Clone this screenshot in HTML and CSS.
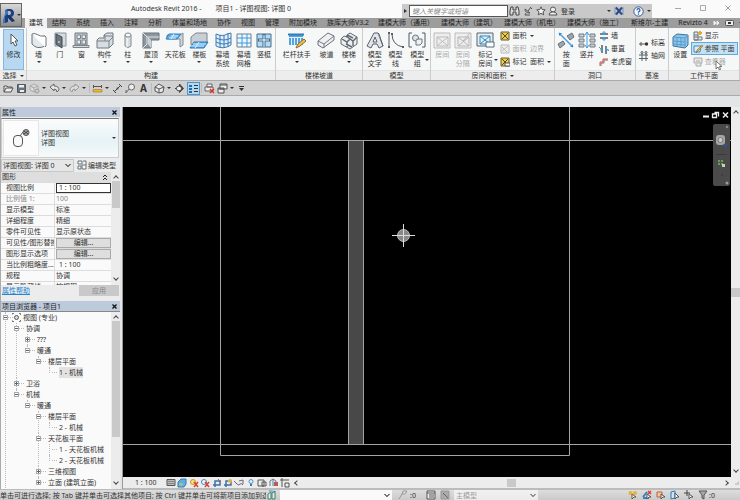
FILE: index.html
```html
<!DOCTYPE html>
<html lang="zh-CN">
<head>
<meta charset="utf-8">
<title>Autodesk Revit 2016</title>
<link rel="stylesheet" href="styles.css">
</head>
<body>
<header class="titlebar">
  <h1 class="title"><span>Autodesk Revit 2016 -</span><span>项目1 - 详图视图: 详图 0</span></h1>
  <div class="infocenter">
    <button class="expand" aria-label="展开"><i class="caret right"></i></button>
    <input class="search" type="text" placeholder="键入关键字或短语" aria-label="键入关键字或短语">
    <button class="ic" aria-label="搜索"><svg width="11" height="10" viewBox="0 0 11 10"><path d="M2 1h2v3h3V1h2l1 4v4H7V6H4v3H1V5z" fill="#ddd" stroke="#444"/></svg></button>
    <button class="ic" aria-label="通讯中心"><svg width="10" height="10" viewBox="0 0 10 10"><path d="M2 3l5 4M2 3q0 4 5 4M5 5l3-4M7 1l2 2M3 7l-1 2h5" fill="none" stroke="#555"/></svg></button>
    <button class="ic" aria-label="收藏夹"><svg width="10" height="10" viewBox="0 0 10 10"><path d="M5 .8l1.2 2.7 3 .3-2.2 2 .7 3L5 7.300 2.300 8.800 3 5.800.8 3.800l3-.3z" fill="#f4f4f4" stroke="#555"/></svg></button>
    <button class="ic login"><svg width="10" height="10" viewBox="0 0 10 10"><circle cx="5" cy="3.500" r="2.500" fill="#eee" stroke="#555"/><path d="M1 9q0-2.500 3-3h2q3 .5 3 3z" fill="#eee" stroke="#555"/></svg>登录</button>
    <i class="caret"></i>
    <button class="ic exchange" aria-label="Exchange"><svg width="10" height="10" viewBox="0 0 10 10"><path d="M1 1v8M9 1v8" stroke="#7d93bd"/><path d="M2 1.500l6 7M8 1.500l-6 7" stroke="#2a4a8c" stroke-width="2"/></svg></button>
    <button class="ic help" aria-label="帮助"><svg width="11" height="11" viewBox="0 0 11 11"><circle cx="5.500" cy="5.500" r="4.700" fill="#f3f6fc" stroke="#445a8c"/><path d="M4 4.300q0-1.600 1.500-1.600T7 4.200q0 .8-1.500 1.800v.7M5.500 7.600v1.200" fill="none" stroke="#2461b4" stroke-width="1.200"/></svg></button>
    <i class="caret"></i>
  </div>
  <div class="winctl">
    <button aria-label="最小化"><svg width="8" height="8" viewBox="0 0 8 8"><path d="M1 4.500h6" stroke="#a8a8a8"/></svg></button>
    <button aria-label="还原"><svg width="8" height="8" viewBox="0 0 8 8"><path d="M1.500 1.500h5v5h-5z" fill="none" stroke="#aaa"/></svg></button>
    <button aria-label="关闭"><svg width="8" height="8" viewBox="0 0 8 8"><path d="M1.500 1.500l5 5m0-5l-5 5" stroke="#999"/></svg></button>
  </div>
</header>
<button class="appmenu" aria-label="应用程序菜单"><svg width="14" height="17" viewBox="0 0 14 17"><path d="M3 3l3-1v13l-3 1zM6 2h3q3 1 3 4t-3 4H6V8h2q1-1 1-2T8 4H6z" fill="#1b3f83"/><path d="M6 9l3 .500 4 4.500-3 1-4-4z" fill="#17346b"/><path d="M1 13l2-6v9l-2 .500zM3 3l3 1v3L3 9z" fill="#4273bd"/></svg><i class="caret"></i></button>
<nav class="tabs">
  <button class="active">建筑</button><button>结构</button><button>系统</button><button>插入</button><button>注释</button><button>分析</button><button>体量和场地</button><button>协作</button><button>视图</button><button>管理</button><button>附加模块</button><button>族库大师V3.2</button><button class="vendor">建模大师（通用）</button><button class="vendor">建模大师（建筑）</button><button class="vendor">建模大师（机电）</button><button class="vendor">建模大师（施工）</button><button>斯维尔-土建</button><button>Revizto 4</button>
  <span class="tabtools"><svg width="8" height="6" viewBox="0 0 8 6"><path d="M1 1l2 2-2 2zM4 1l2 2-2 2z" fill="#eee" stroke="#eee"/></svg><svg width="10" height="7" viewBox="0 0 10 7"><rect x=".5" y=".5" width="8" height="5" rx="1" fill="#eee" stroke="#555"/><path d="M3 3h3" stroke="#333" stroke-width="2"/></svg><i class="caret"></i></span>
</nav>
<main class="ribbon">
  <section class="panel select">
    <div class="tools">
      <button class="tool on"><svg viewBox="0 0 20 20"><path d="M7 4v10l2-2 2 4 2-1-2-4h3z" fill="#fff" stroke="#555"/></svg>修改</button>
    </div>
    <h2>选择 <i class="caret"></i></h2>
  </section>
  <section class="panel build">
    <div class="tools">
      <button class="tool"><svg viewBox="0 0 20 20"><path d="M3 4q6 5 13 2v10q-8 4-13-2z" fill="#e4e8ec" stroke="#667078"/><path d="M3 4q2-1 4 0 5 3 9 2l1 1v9l-1 1" fill="#fff" stroke="#778"/></svg>墙<i class="caret"></i></button>
      <button class="tool"><svg viewBox="0 0 20 20"><path d="M5 3h11v13H5z" fill="#d5dce0" stroke="#899399"/><path d="M6 4l6 3v11l-6-4z" fill="#69747d" stroke="#444c54"/><path d="M9 11v2" stroke="#fff"/></svg>门</button>
      <button class="tool"><svg viewBox="0 0 20 20"><path d="M4 3h12v12H4z" fill="#c6cbd0" stroke="#717980"/><path d="M6 5h3.500v3.500H6zm5 0h3.500v3.500H11zM6 10h3.500v4H6zm5 0h3.500v4H11z" fill="#e8edf0" stroke="#7e878e"/><path d="M2 15.500h16v2H2z" fill="#d7dadd" stroke="#7c848b"/></svg>窗</button>
      <button class="tool"><svg viewBox="0 0 20 20"><path d="M2 10l2-2h5V5l3-2h6v11l-4 4H2z" fill="#d8dde1" stroke="#707a82"/><path d="M9 5l1 1h8M10 6v5H2m8 0h4v7m0-7l4-4" fill="none" stroke="#78828a"/></svg>构件<i class="caret"></i></button>
      <button class="tool"><svg viewBox="0 0 20 20"><path d="M7 5v11q3 3 6 0V5z" fill="#d8dde1" stroke="#818a91"/><ellipse cx="10" cy="5" rx="3" ry="2" fill="#f6f7f8" stroke="#818a91"/><path d="M9 8v9" stroke="#fff"/></svg>柱<i class="caret"></i></button>
      <button class="tool"><svg viewBox="0 0 20 20"><path d="M2 3h16v7h-8v8H2z" fill="#8c969e" stroke="#697279"/><path d="M2 3l4 4h12M6 7v7l-4 4" fill="none" stroke="#e2e6e9"/><path d="M10 10v8l-3-4V7z" fill="#ccd3d8"/></svg>屋顶<i class="caret"></i></button>
      <button class="tool"><svg viewBox="0 0 20 20"><path d="M2 5h13l3-2v12l-3 2V9H2z" fill="#cfd5da" stroke="#838c93"/><path d="M4 4h12l-4 5H1z" fill="#65aee5" stroke="#2e81c5"/><path d="M6 6h7m-9 2h7M9 4L6 9" stroke="#def2ff"/></svg>天花板</button>
      <button class="tool"><svg viewBox="0 0 20 20"><path d="M2 7l5-4h11v10l-5 2H2z" fill="#c9d0d5" stroke="#7b858c"/><path d="M5 12h14l-4 6H1z" fill="#58a7e2" stroke="#2b7abc"/><path d="M4 14h13M2 16h13M10 12l-4 6" stroke="#dff2ff"/></svg>楼板<i class="caret"></i></button>
      <button class="tool"><svg viewBox="0 0 20 20"><path d="M3 4q7 3 11 0l4-1v12q-8 5-15 1z" fill="#dceeff" stroke="#467ba5"/><path d="M3 8q8 4 15 0M3 12q8 4 15 0M7 5v13m4-13v13m4-15v14" fill="none" stroke="#397ab0"/></svg>幕墙<br>系统</button>
      <button class="tool"><svg viewBox="0 0 20 20"><path d="M3 4h14v13H3z" fill="#eef7ff" stroke="#71808a"/><path d="M3 8h14M3 13h14M8 4v13m5-13v13" stroke="#3f97db"/></svg>幕墙<br>网格</button>
      <button class="tool"><svg viewBox="0 0 20 20"><path d="M3 4h14v13H3z" fill="#b5d9f3" stroke="#486c88"/><path d="M4 10h12M10 4v13" stroke="#39688d" stroke-width="3"/><path d="M5 10h10M10 5v12" stroke="#fff"/></svg>竖梃</button>
    </div>
    <h2>构建</h2>
  </section>
  <section class="panel stairs">
    <div class="tools">
      <button class="tool"><svg viewBox="0 0 20 20"><path d="M2 4h14v11H2z" fill="#56a2dc"/><path d="M1 7.500h16M4.500 7v9m3-9v9m3-9v9m3-9v9" stroke="#dff0fc"/><path d="M1 3.500h16v2H1z" fill="#347cb6"/><path d="M9 18l2-4 6-5 2 2-6 5z" fill="#f0c04a" stroke="#8e6b2a"/></svg>栏杆扶手<i class="caret"></i></button>
      <button class="tool"><svg viewBox="0 0 20 20"><path d="M2 11L12 3l6 3v4L7 18l-5-3z" fill="#eef0f2" stroke="#68727a"/><path d="M2 11l6 3 10-8M8 14v4" fill="none" stroke="#727c83"/></svg>坡道</button>
      <button class="tool"><svg viewBox="0 0 20 20"><path d="M2 9l3-3 3 1V5l3-2 7 4v7l-7 5-9-5z" fill="#eceff1" stroke="#606a71"/><path d="M3 9l5 3 3-3 3 2 4-4M8 12v5m3-8l-4-3m7 5v5M8 5l6 3M7 14l6 3" fill="none" stroke="#606a71" stroke-width="1.400"/></svg>楼梯<i class="caret"></i></button>
    </div>
    <h2>楼梯坡道</h2>
  </section>
  <section class="panel model">
    <div class="tools">
      <button class="tool"><svg viewBox="0 0 20 20"><path d="M2 16L9 3h4l5 13-4 2-2-4H8l-2 4z" fill="#e3e7ea" stroke="#56616a"/><path d="M10 7l-2 5h4zM13 3l1 1 4 12" fill="#fff" stroke="#56616a"/></svg>模型<br>文字</button>
      <button class="tool"><svg viewBox="0 0 20 20"><path d="M3 3v14M6 4q0 11 11 13" fill="none" stroke="#555f67"/><path d="M2 2h2v2H2zm0 14h2v2H2zM5 3h2v2H5zm11 13h2v2h-2z" fill="#56616a"/></svg>模型<br>线</button>
      <button class="tool"><svg viewBox="0 0 20 20"><path d="M5 3H2v14h3m10-14h3v14h-3" fill="none" stroke="#4d5a64"/><circle cx="8.500" cy="8" r="3" fill="#dce3e7" stroke="#6a767f"/><path d="M9 10l2-1h4v4l-2 2H9z" fill="#eef1f3" stroke="#6a767f"/></svg>模型<br>组<i class="caret side"></i></button>
    </div>
    <h2>模型</h2>
  </section>
  <section class="panel room">
    <div class="tools">
      <button class="tool" disabled><svg viewBox="0 0 20 20"><path d="M2 3h16v15H2z" fill="#eee" stroke="#bbb"/><path d="M5 7h11v9H5zl11 9m0-9L5 16" fill="none" stroke="#bbb"/></svg>房间</button>
      <button class="tool" disabled><svg viewBox="0 0 20 20"><path d="M2 3h16v15H2z" fill="#eee" stroke="#bbb"/><path d="M5 7h11v9H5zl11 9m0-9L5 16M10 11l7-8" fill="none" stroke="#b7b7b7"/></svg>房间<br>分隔</button>
      <button class="tool"><svg viewBox="0 0 20 20"><path d="M2 3h16v13H2z" fill="#e9edef" stroke="#59646b"/><path d="M5 6h10v8H5zl10 8m0-8L5 14" fill="none" stroke="#2b8bc8"/><path d="M11 12h8v5h-8z" fill="#fff" stroke="#4f6c80"/></svg>标记<br>房间<i class="caret side"></i></button>
      <div class="stack">
        <button class="row"><svg viewBox="0 0 10 10"><path d="M1 1h8v8H1z" fill="#f1cd45" stroke="#645b37"/><path d="M2 2l6 6m0-6L2 8" stroke="#544c2f"/></svg>面积<i class="caret"></i></button>
        <button class="row" disabled><svg viewBox="0 0 10 10"><path d="M1 1h8v8H1zM2 7l6-5M2 3l5 5" fill="#eee" stroke="#bbb"/></svg>面积&ensp;边界</button>
        <button class="row"><svg viewBox="0 0 10 10"><path d="M1 1h8v8H1z" fill="#f1cd45" stroke="#645b37"/><path d="M2 2l6 6m0-6L2 8" stroke="#544c2f"/><path d="M5 6h5v3H5z" fill="#fff" stroke="#555"/></svg>标记&ensp;面积<i class="caret"></i></button>
      </div>
    </div>
    <h2>房间和面积 <i class="caret"></i></h2>
  </section>
  <section class="panel opening">
    <div class="tools">
      <button class="tool"><svg viewBox="0 0 20 20"><path d="M11 6l5-3 2 4-4 3zM2 14l5-3 2 3-5 4z" fill="#9ca6ad" stroke="#66717a"/><path d="M3 3l14 14" stroke="#4aa1e1" stroke-width="1.500"/><path d="M3 3v3l3-3zm14 14v-3l-3 3z" fill="#328acb"/></svg>按<br>面</button>
      <button class="tool"><svg viewBox="0 0 20 20"><path d="M2 4h5v3H2zm11 0h5v3h-5zM2 9h5v3H2zm11 0h5v3h-5zM2 14h5v3H2zm11 0h5v3h-5z" fill="#c8d0d5" stroke="#707d86"/><path d="M10 2v16M8 5l2-3 2 3M8 15l2 3 2-3" fill="none" stroke="#47a0df"/></svg>竖井</button>
      <div class="stack">
        <button class="row"><svg viewBox="0 0 10 10"><path d="M1 3h8M1 7h8" stroke="#4f5e68" stroke-width="1.500"/><path d="M5 0v4m0 2v4M3 2h4M3 8h4" stroke="#39a0e7"/></svg>墙</button>
        <button class="row"><svg viewBox="0 0 10 10"><path d="M3 1v8m4-7v8" stroke="#4f5e68" stroke-width="1.500"/><path d="M0 3l3 3m4-2l3 3M1 6h2m4 0h3" stroke="#39a0e7"/></svg>垂直</button>
        <button class="row"><svg viewBox="0 0 10 10"><path d="M1 9V5h3V2h5" fill="none" stroke="#dc4f45"/><path d="M2 9V6h3V3h4" fill="none" stroke="#8b6a65"/></svg>老虎窗</button>
      </div>
    </div>
    <h2>洞口</h2>
  </section>
  <section class="panel datum">
    <div class="tools">
      <div class="stack">
        <button class="row"><svg viewBox="0 0 10 10"><path d="M0 6h6M2 4v4" stroke="#555"/><circle cx="7.500" cy="6" r="1.700" fill="#333"/></svg>标高</button>
        <button class="row"><svg viewBox="0 0 10 10"><path d="M3 1v9m4-9v9M0 4h9M0 7.500h9" stroke="#56616a"/><circle cx="3" cy="1.500" r="1" fill="#fff" stroke="#555"/><circle cx="7" cy="1.500" r="1" fill="#fff" stroke="#555"/></svg>轴网</button>
      </div>
    </div>
    <h2>基准</h2>
  </section>
  <section class="panel plane">
    <div class="tools">
      <button class="tool"><svg viewBox="0 0 20 20"><path d="M3 7l4-3 11 1v10l-3 3-12-2z" fill="#8cc5ea" stroke="#38749f"/><path d="M3 7l12 1 3-3M15 8v10M3 11l12 1M3 14l12 1M7 7v9m4-9v9" fill="none" stroke="#5b9dcb"/></svg>设置</button>
      <div class="stack">
        <button class="row"><svg viewBox="0 0 10 10"><path d="M1 1h4v8H1zM1 4h4M1 6h8v3H1" fill="#e6ebee" stroke="#68747c"/><path d="M7 0v4M5 2h4" stroke="#e2aa32" stroke-width="2"/></svg>显示</button>
        <button class="row on"><svg viewBox="0 0 10 10"><path d="M1 8V2h7L7 8z" fill="#d8edfa" stroke="#438dbf"/><path d="M3 9l1-3 5-5 1 1-5 5z" fill="#e7aa41" stroke="#825e27" stroke-width=".5"/></svg>参照 平面</button>
        <button class="row" disabled><svg viewBox="0 0 10 10"><path d="M1 1h8v5H1zM3 4h4M3 7v2h5V6" fill="#e8e8e8" stroke="#aaa"/></svg>查看器</button>
      </div>
      <svg class="pointer" width="8" height="11" viewBox="0 0 8 11"><path d="M1 1v8l2-2 1.500 3 1-.5L4.500 6.500H7z" fill="#fff" stroke="#555" stroke-width=".8"/></svg>
    </div>
    <h2>工作平面</h2>
  </section>
</main>
<div class="qat">
  <button aria-label="打开"><svg viewBox="0 0 11 11"><path d="M1 9V3h3l1 1h4v1M1 9l2-4h7L8 9z" fill="#eee" stroke="#555"/></svg></button>
  <button aria-label="保存"><svg viewBox="0 0 11 11"><path d="M1.500 1.500h8v8h-8z" fill="#68737d" stroke="#4d5860"/><path d="M3 2h5v2.500H3zm1 5h4v2H4z" fill="#eee"/></svg></button>
  <button aria-label="同步"><svg viewBox="0 0 11 11"><path d="M1 3l4-2 4 2v4L5 9 1 7zM1 3l4 2 4-2M5 5v4" fill="#ddd" stroke="#aaa"/><circle cx="8" cy="8" r="2" fill="#ccc" stroke="#999"/></svg></button><i class="caret"></i>
  <button aria-label="放弃"><svg viewBox="0 0 11 11"><path d="M1 4l4-3v2q5 0 5 4L8 9q0-3-3-3v2z" fill="#e6e6e6" stroke="#666"/></svg></button><i class="caret"></i>
  <button aria-label="重做"><svg viewBox="0 0 11 11"><path d="M10 4L6 1v2Q1 3 1 7l2 2q0-3 3-3v2z" fill="#ddd" stroke="#999"/></svg></button><i class="caret"></i>
  <span class="sep"></span>
  <button aria-label="测量"><svg viewBox="0 0 11 11"><path d="M1 6.500h9v2.500H1z" fill="#f1b52c" stroke="#a1752a" stroke-width=".6"/><path d="M1 3.500h9M1.500 2v3m8-3v3" stroke="#555"/></svg></button><i class="caret"></i>
  <button aria-label="对齐尺寸标注"><svg viewBox="0 0 11 11"><path d="M2 9l7-7M1 7l3 3m3-9l3 3" stroke="#444"/><circle cx="5.500" cy="5.500" r="1" fill="#444"/></svg></button>
  <button aria-label="标记"><svg viewBox="0 0 11 11"><circle cx="6.500" cy="4" r="3" fill="#eee" stroke="#666"/><path d="M1 10l3-4m-3 4V7" stroke="#666"/></svg></button>
  <button class="textcmd" aria-label="文字">A</button>
  <span class="sep"></span>
  <button aria-label="三维视图"><svg viewBox="0 0 11 11"><path d="M1 4l4-3 5 3-1 5-4 1-4-2z" fill="#e8eaec" stroke="#555"/><path d="M1 4l4 2 5-2M5 6v4" fill="none" stroke="#555"/></svg></button><i class="caret"></i>
  <button aria-label="剖面"><svg viewBox="0 0 11 11"><path d="M1 5.500h2M5.500 1l4 4.500-4 4z" fill="#444" stroke="#444"/><circle cx="5" cy="5.500" r="2.500" fill="#eee" stroke="#444"/></svg></button>
  <button class="on" aria-label="细线"><svg viewBox="0 0 11 11"><path d="M1 3h3M1 6h3M1 9h3" stroke="#246da8" stroke-width="2"/><path d="M6 2.500h4M6 5.500h4M6 8.500h4" stroke="#333"/></svg></button>
  <span class="sep"></span>
  <button aria-label="关闭隐藏窗口"><svg viewBox="0 0 11 11"><path d="M3 1h5v3H3zM1 4h8v4H1z" fill="#eee" stroke="#666"/><path d="M6 6l4 4m0-4l-4 4" stroke="#da352c" stroke-width="1.500"/></svg></button>
  <button aria-label="切换窗口"><svg viewBox="0 0 11 11"><path d="M3 1h7v5H3zM1 5h6v5H1z" fill="#eee" stroke="#555"/><path d="M1 6h6M3 2h7" stroke="#555"/></svg></button><i class="caret"></i>
  <svg viewBox="0 0 11 11"><path d="M3 3.500h5" stroke="#333"/><path d="M3 5h5L5.500 8z" fill="#333"/></svg>
</div>
<div class="workspace">
  <aside class="palettes">
    <div class="cap"><h2>属性</h2><button aria-label="关闭属性"><svg width="5" height="5" viewBox="0 0 5 5"><path d="M.5.5l4 4m0-4l-4 4" stroke="#111" stroke-width="1.300"/></svg></button></div>
    <button class="typesel"><span class="thumb"><svg width="20" height="20" viewBox="0 0 20 20"><rect x="2.500" y="7.500" width="9" height="11" rx="3.500" fill="#fafafa" stroke="#555"/><path d="M9 8l3-4h2" fill="none" stroke="#555"/><circle cx="15" cy="4.500" r="3" fill="#aaa" stroke="#555"/><path d="M13 3l4 3m0-3l-4 3" stroke="#444"/></svg></span><span class="typename">详图视图<br>详图</span><i class="caret"></i></button>
    <div class="typebar">
      <select aria-label="视图"><option>详图视图: 详图 0</option></select>
      <button><svg width="10" height="10" viewBox="0 0 10 10"><path d="M1 1h4v3H1zM1 6h3v3H1zM6 1h3v8H5V5h4" fill="#f4f7f8" stroke="#66727a"/></svg>编辑类型</button>
    </div>
    <div class="props">
      <table>
        <colgroup><col class="names"><col></colgroup>
        <thead><tr><th colspan="2"><span class="group">图形<svg width="6" height="7" viewBox="0 0 6 7"><path d="M1 3l2-2 2 2M1 6l2-2 2 2" fill="none" stroke="#222"/></svg></span></th></tr></thead>
        <tbody>
        <tr><th>视图比例</th><td><input type="text" value="1 : 100" aria-label="视图比例"></td></tr>
        <tr class="dim"><th>比例值 1:</th><td>100</td></tr>
        <tr><th>显示模型</th><td>标准</td></tr>
        <tr><th>详细程度</th><td>精细</td></tr>
        <tr><th>零件可见性</th><td>显示原状态</td></tr>
        <tr><th>可见性/图形替换</th><td><button>编辑...</button></td></tr>
        <tr><th>图形显示选项</th><td><button>编辑...</button></td></tr>
        <tr><th>当比例粗略度...</th><td class="indent">1 : 100</td></tr>
        <tr><th>规程</th><td>协调</td></tr>
        <tr><th>显示隐藏线</th><td>按规程</td></tr>
        </tbody>
      </table>
      <div class="vscroll"><i class="chev up"></i><span class="thumbbar short"></span><i class="chev down"></i></div>
    </div>
    <div class="apply"><a href="#help">属性帮助</a><button disabled>应用</button></div>
    <div class="cap"><h2>项目浏览器 - 项目1</h2><button aria-label="关闭项目浏览器"><svg width="5" height="5" viewBox="0 0 5 5"><path d="M.5.5l4 4m0-4l-4 4" stroke="#111" stroke-width="1.300"/></svg></button></div>
    <div class="browser">
      <ul class="tree">
        <li><b class="box"></b><span class="views"><svg width="9" height="9" viewBox="0 0 9 9"><path d="M0 2V.5h2M7 .5h1.500V2M0 7v1.500h2m5 0h1.500V7" fill="none" stroke="#777"/><circle cx="4.500" cy="4.500" r="2" fill="#ddd" stroke="#555"/></svg>视图 (专业)</span>
          <ul>
            <li><b class="box"></b><span>协调</span>
              <ul>
                <li><b class="box plus"></b><span>???</span></li>
                <li><b class="box"></b><span>暖通</span>
                  <ul><li><b class="box"></b><span>楼层平面</span>
                    <ul><li class="leaf"><span class="picked">1 - 机械</span></li></ul></li></ul></li>
              </ul></li>
            <li><b class="box plus"></b><span>卫浴</span></li>
            <li><b class="box"></b><span>机械</span>
              <ul><li><b class="box"></b><span>暖通</span>
                <ul>
                  <li><b class="box"></b><span>楼层平面</span><ul><li class="leaf"><span>2 - 机械</span></li></ul></li>
                  <li><b class="box"></b><span>天花板平面</span><ul><li class="leaf"><span>1 - 天花板机械</span></li><li class="leaf"><span>2 - 天花板机械</span></li></ul></li>
                  <li><b class="box plus"></b><span>三维视图</span></li>
                  <li><b class="box plus"></b><span>立面 (建筑立面)</span></li>
                </ul></li></ul></li>
          </ul></li>
      </ul>
      <div class="vscroll"><i class="chev up"></i><span class="thumbbar long"></span><i class="chev down"></i></div>
    </div>
  </aside>
  <section class="view">
    <div class="canvasrow">
      <div class="canvas">
        <svg class="drawing" viewBox="0 0 608 371" preserveAspectRatio="xMinYMin slice">
          <rect x="225" y="33" width="16" height="305" fill="#484848"/>
          <path d="M0 33.500h608M0 337.500h608M97.500 0v348.500h349V0M225.500 33v305M240.500 33v305" fill="none" stroke="#a4a4a4"/>
          <circle cx="280.500" cy="128.500" r="6" fill="#888" stroke="#bbb"/>
          <path d="M269 128.500h23M280.500 117v23" stroke="#ddd"/>
        </svg>
        <div class="viewctl"><svg width="26" height="8" viewBox="0 0 26 8"><path d="M0 5.500h6" stroke="#eee" stroke-width="2"/><path d="M11.500 1.500h4v4M9.500 3h4v3.500h-4z" fill="none" stroke="#eee" stroke-width="1.300"/><path d="M20 1.500l5 5m0-5l-5 5" stroke="#eee" stroke-width="1.500"/></svg></div>
        <div class="navbar"><svg width="17" height="62" viewBox="0 0 17 62"><circle cx="14" cy="3" r="1.200" fill="#888"/><rect x="3" y="11" width="9" height="10" rx="3" fill="#a6a6a6"/><circle cx="7.500" cy="16" r="2.500" fill="#ccc" stroke="#777"/><path d="M9 21l7-2-3 4z" fill="#345487"/><path d="M3 30.500h11" stroke="#3b3b3b"/><path d="M5 36h5v5H5z" fill="#779264"/><path d="M5 38.500h5M7.500 36v5" stroke="#385f31"/><rect x="9" y="40" width="3" height="3" fill="#c4cfbc"/><path d="M8 51h2" stroke="#353535"/><circle cx="14" cy="59" r="1.500" fill="#999"/></svg></div>
      </div>
      <div class="vscroll page"><i class="chev up"></i><span class="thumbbar mid"></span><i class="chev down"></i></div>
    </div>
    <div class="viewbar">
      <span class="scale">1 : 100</span>
      <div class="viewtools">
      <svg viewBox="0 0 10 10"><path d="M1 1.500h8v6H1z" fill="#bbb" stroke="#555"/><path d="M1 3.500h8M1 5.500h8" stroke="#888"/></svg>
      <svg viewBox="0 0 10 10"><path d="M1 4l3-3h5v5L7 9H1z" fill="#66ace2" stroke="#347bb5"/><path d="M2 5h4v3H2z" fill="#8fc59c"/></svg>
      <svg viewBox="0 0 10 10"><circle cx="4" cy="4" r="2.500" fill="#ffe16c" stroke="#c69439"/><path d="M5 4l4 5m0-5L5 9" stroke="#d84331" stroke-width="1.500"/></svg>
      <svg viewBox="0 0 10 10"><circle cx="4" cy="4" r="2.500" fill="#edf6ff" stroke="#4b87b6"/><path d="M5 4l4 5m0-5L5 9" stroke="#d84331" stroke-width="1.500"/></svg>
      <svg viewBox="0 0 10 10"><path d="M1 7h7V3M3 9V3h6" fill="none" stroke="#3c72a7" stroke-width="1.500"/><path d="M6 1l3 3" stroke="#d75345"/></svg>
      <svg viewBox="0 0 10 10"><path d="M1 7h7V3M3 9V3h6" fill="none" stroke="#3c72a7" stroke-width="1.500"/><circle cx="7" cy="3" r="2" fill="#e6b44d"/></svg>
      <svg viewBox="0 0 10 10"><path d="M0 3l3 3q2 2 3 0 2-1 3 1M5 3l4-1v4" fill="none" stroke="#667"/></svg>
      <svg viewBox="0 0 10 10"><circle cx="5" cy="3.500" r="2" fill="#d9f0ff" stroke="#4f91ca"/><path d="M4 7h2" stroke="#3e75aa" stroke-width="2"/></svg>
      <svg viewBox="0 0 10 10"><path d="M1 2h6v6H1zM5 4h4v4H5z" fill="#eee" stroke="#555"/></svg>
      <svg viewBox="0 0 10 10"><path d="M1 8V3l3-2 3 2v5M4 1v7" fill="none" stroke="#587a9a"/><path d="M5 4h4v4H5z" fill="#b45d59"/></svg>
      <svg viewBox="0 0 10 10"><path d="M2 0v9M0 2h9M5 5h4v4H5z" fill="none" stroke="#555"/></svg>
      </div>
      <i class="chev left"></i>
      <span class="track"><span></span></span>
      <i class="chev next"></i><i class="grip"></i>
    </div>
  </section>
</div>
<footer class="status">
  <p>单击可进行选择; 按 Tab 键并单击可选择其他项目; 按 Ctrl 键并单击可将新项目添加到选择集</p>
  <svg class="worksets" viewBox="0 0 10 10"><path d="M1 9V4l3-2v7zM5 9V3l3-2v8z" fill="#dceee5" stroke="#3e8171"/><path d="M2 1q4-1 6 2" fill="none" stroke="#4a94c4"/></svg>
  <select class="wide" aria-label="工作集"><option></option></select>
  <svg viewBox="0 0 10 10"><path d="M1 9l3-5 1-3h4L7 4H4" fill="#ddd" stroke="#999"/></svg><span class="count">:0</span>
  <svg class="opts" viewBox="0 0 10 10"><path d="M1 1h8v8H1zM1 3h8M3 5h5M3 7h5" fill="#eee" stroke="#555"/></svg>
  <svg viewBox="0 0 10 10"><path d="M1 1h8v8H1z" fill="#aaa" stroke="#999"/><path d="M3 3l5 5" stroke="#666"/></svg>
  <select class="main" disabled aria-label="设计选项"><option>主模型</option></select>
  <div class="filters">
    <svg viewBox="0 0 10 10"><circle cx="2.500" cy="3" r="2" fill="#e7b23d"/><circle cx="7" cy="3" r="2" fill="#e7b23d"/><path d="M4 4v5l2-2h2z" fill="#fff" stroke="#665b40"/></svg>
    <svg viewBox="0 0 10 10"><path d="M1 7l4-5M1 8h6" stroke="#3980c0" stroke-width="2"/><path d="M6 1l3 3m0-3L6 4" stroke="#e04031" stroke-width="1.500"/><path d="M5 4v5l2-2h2z" fill="#fff" stroke="#555"/></svg>
    <svg viewBox="0 0 10 10"><path d="M1 2h5v5H1z" fill="#f0cb98" stroke="#c25f42"/><path d="M5 4v5l2-2h2z" fill="#fff" stroke="#555"/></svg>
    <svg viewBox="0 0 10 10"><path d="M1 2l4-1v7l-4 1z" fill="#c9e6fc" stroke="#287bbb"/><path d="M5 3v6l2-2h2z" fill="#fff" stroke="#555"/></svg>
    <svg viewBox="0 0 10 10"><path d="M3 0v6M0 3h6" stroke="#444"/><path d="M5 4v5l2-2h2z" fill="#fff" stroke="#555"/></svg>
    <svg viewBox="0 0 10 10"><path d="M1 1h8L6 5v4L4 8V5z" fill="#aaa" stroke="#555"/></svg><span>:0</span>
  </div>
</footer>
</body>
</html>
```
FILE: styles.css
```css
* { box-sizing: border-box; }
body {
  margin: 0;
  height: 100vh;
  overflow: hidden;
  display: flex;
  flex-direction: column;
  position: relative;
  background: #e3e5e7;
  color: #333;
  font: 7px/9px "Noto Sans", "Noto Sans CJK SC", sans-serif;
}
button, input, select {
  margin: 0;
  padding: 0;
  border: 0;
  border-radius: 0;
  background: none;
  color: inherit;
  font: inherit;
}
button { white-space: nowrap; }
h1, h2, p, ul { margin: 0; padding: 0; font: inherit; }
svg { display: block; flex: none; }

.caret {
  flex: none;
  width: 0;
  height: 0;
  border: 2px solid transparent;
  border-top-color: #333;
  border-bottom: 0;
}
.caret.right { border: 2px solid transparent; border-left: 3px solid #333; border-right: 0; }

/* Title bar */
.titlebar { flex: none; height: 18px; display: flex; background: #fafafa; }
.title {
  flex: 1;
  display: flex;
  justify-content: flex-end;
  gap: 14px;
  padding: 4px 111px 0 0;
  white-space: nowrap;
}
.infocenter {
  flex: none;
  width: 250px;
  height: 14px;
  margin-top: 4px;
  display: flex;
  align-items: center;
  background: #c9c9c9;
}
.expand { width: 7px; height: 12px; display: grid; place-items: center; }
.search { width: 99px; height: 12px; padding: 0 2px; border: 1px solid #555; background: #fff; }
.search::placeholder { color: #888; font-style: italic; }
.ic { width: 13px; height: 12px; display: flex; align-items: center; justify-content: center; }
.login { width: 40px; gap: 3px; justify-content: flex-start; margin: 0 19px 0 1px; }
.exchange { margin-left: 1px; }
.help { width: 14px; margin: 0 2px 0 6px; }
.winctl { flex: none; width: 88px; display: flex; justify-content: space-between; padding: 0 8px 2px 22px; }

.appmenu {
  position: absolute;
  left: 0;
  top: 3px;
  z-index: 2;
  width: 22px;
  height: 24px;
  display: flex;
  align-items: center;
  gap: 1px;
  padding-left: 1px;
  border: 1px solid #666;
  background: linear-gradient(#d8d8d8, #8e8e8e);
}

/* Ribbon tabs */
.tabs { flex: none; height: 10px; display: flex; padding-left: 25px; background: #9d9d9d; color: #222; }
.tabs button { padding: 0 5px; line-height: 10px; }
.tabs .active { padding: 0 4px; background: #f1f1f1; }
.tabs .vendor { padding: 0 3px 0 4px; }
.tabtools { margin-left: auto; display: flex; align-items: center; gap: 4px; padding-right: 2px; }

/* Ribbon panels */
.ribbon {
  flex: none;
  display: grid;
  grid-template-columns: 27fr 249fr 87fr 68fr 124fr 81fr 33fr 71fr;
  background: #f6f7f7;
  border-bottom: 1px solid #aaa;
}
.panel { min-width: 0; border-right: 1px solid #ccc; }
.panel h2 {
  display: flex;
  align-items: center;
  justify-content: center;
  gap: 3px;
  height: 10px;
  border-top: 1px solid #e3e3e3;
  background: #ededed;
}
.tools { display: grid; height: 42px; padding: 1px 1px 0; }
.tool {
  position: relative;
  display: flex;
  flex-direction: column;
  align-items: center;
  min-width: 0;
  padding-top: 1px;
}
.tool svg { width: 20px; height: 20px; }
.tool .caret { margin-top: 2px; }
.tool .side { position: absolute; right: 0; bottom: 9px; }
.tool.on { border: 1px solid #87b6dc; background: #b8d8f1; padding-top: 0; }
.ribbon :disabled { color: #aaa; }
.select .tools { padding: 1px 2px 0 3px; }
.build .tools { grid-template-columns: 21fr 21fr 22fr 24fr 22fr 24fr 24fr 24fr 22fr 20fr 20fr; }
.stairs .tools { grid-template-columns: 40fr 20fr 25fr; }
.model .tools { grid-template-columns: 22fr 20fr 24fr; }
.room .tools { grid-template-columns: 21fr 21fr 25fr 55fr; }
.opening .tools { grid-template-columns: 21fr 21fr 37fr; }
.plane .tools { position: relative; grid-template-columns: 21fr 48fr; }
.stack { display: flex; flex-direction: column; }
.row { display: flex; align-items: center; gap: 2px; height: 13px; padding: 0 2px; }
.row svg { width: 10px; height: 10px; }
.row .caret { margin-left: 3px; }
.room .row { gap: 3px; }
.room .row .caret { margin-left: 0; }
.datum .stack { padding-top: 7px; }
.row.on { border: 1px solid #62a7da; background: #c5e2f5; padding: 0 1px; }
.pointer { position: absolute; left: 46px; top: 32px; }

/* Quick access toolbar */
.qat {
  flex: none;
  height: 15px;
  display: flex;
  align-items: center;
  padding-left: 2px;
  border-bottom: 1px solid #aaa;
  background: #d1d1d1;
}
.qat button { width: 13px; height: 13px; display: grid; place-items: center; }
.qat svg { width: 11px; height: 11px; }
.qat .textcmd { font-size: 10px; font-weight: bold; }
.qat .caret { margin: 0 2px 0 1px; }
.qat .sep { width: 1px; height: 10px; margin: 0 1px; background: #bbb; }
.qat .on { margin-left: 1px; border: 1px solid #4c96cd; background: #b2d7f0; }

/* Workspace */
.workspace { flex: 1; min-height: 0; display: flex; margin-top: 11px; }
.palettes {
  flex: none;
  width: 120px;
  margin-right: 2px;
  display: flex;
  flex-direction: column;
  background: #ececec;
  border-left: 1px solid #aaa;
}
.cap {
  flex: none;
  height: 10px;
  display: flex;
  align-items: center;
  justify-content: space-between;
  padding: 0 3px 0 1px;
  background: #bccadb;
  color: #222;
}
.cap h2 { white-space: nowrap; }
.typesel {
  flex: none;
  height: 40px;
  display: flex;
  align-items: center;
  gap: 2px;
  margin: 1px 1px 0 0;
  padding: 0 2px 0 1px;
  border: 1px solid #ccc;
  border-top-color: #777;
  background: linear-gradient(#fbfcfc, #e6f2f6 60%, #f7fafb);
  text-align: left;
}
.thumb { width: 36px; height: 36px; display: grid; place-items: center; background: #fcfcfc; border: 1px solid #e6e6e6; }
.typename { flex: 1; }
.typebar { flex: none; height: 14px; display: flex; align-items: center; gap: 3px; }
.typebar select { width: 73px; height: 13px; padding-left: 1px; }
.typebar button { display: flex; align-items: center; gap: 1px; }
select {
  appearance: none;
  border: 1px solid #c8c8c8;
  background:
    linear-gradient(45deg, transparent 40%, #777 40%, #777 70%, transparent 70%) right 5px center / 3px 3px no-repeat,
    linear-gradient(-45deg, transparent 40%, #777 40%, #777 70%, transparent 70%) right 2px center / 3px 3px no-repeat,
    #e6e6e6;
}
.props { flex: none; height: 113px; display: flex; overflow: hidden; background: #fafafa; }
.props table { flex: 1; width: 100%; align-self: flex-start; table-layout: fixed; border-collapse: separate; border-spacing: 0; }
.names { width: 54px; }
.props tr { height: 11px; }
.props th, .props td {
  height: 11px;
  padding: 0;
  border-bottom: 1px solid #ddd;
  font-weight: normal;
  line-height: 10px;
  text-align: left;
  white-space: nowrap;
  overflow: hidden;
}
.props tbody th { padding-left: 5px; border-right: 1px solid #ddd; }
.props tbody td { padding-left: 1px; }
.props thead th { background: #dedede; }
.group { display: flex; justify-content: space-between; align-items: center; padding: 0 3px 0 1px; }
.props input { display: block; width: 100%; height: 10px; padding-left: 2px; border: 1px solid #333; background: #fff; }
.props td button { display: block; width: 100%; height: 10px; line-height: 8px; border: 1px solid #aaa; background: #dedede; }
.props tbody .indent { padding-left: 4px; }
.dim { color: #888; }

.vscroll {
  flex: none;
  width: 9px;
  display: flex;
  flex-direction: column;
  align-items: center;
  padding: 3px 0;
  background: #ececec;
}
.thumbbar { width: 8px; background: #c9c9c9; }
.short { height: 27px; margin-top: 2px; }
.long { height: 116px; margin-top: 2px; }
.vscroll .down { margin-top: auto; }
.page { justify-content: space-between; }
.page .down { margin-top: 0; }
.mid { width: 9px; height: 9px; }
.chev { flex: none; width: 4px; height: 4px; border: solid #444; border-width: 1px 0 0 1px; }
.up { transform: translateY(1px) rotate(45deg); }
.down { transform: translateY(-2px) rotate(225deg); }
.left { transform: rotate(-45deg); }
.next { transform: rotate(135deg); }

.apply { flex: none; height: 16px; display: flex; align-items: flex-start; justify-content: space-between; padding: 0 1px; }
.apply a { color: #2384d3; line-height: 11px; }
.apply button { width: 40px; height: 11px; background: #c9c9c9; color: #888; }
.browser { flex: 1; min-height: 0; display: flex; overflow: hidden; background: #fafafa; border-top: 1px solid #888; }
.tree { flex: 1; min-width: 0; overflow: hidden; }
.tree, .tree ul { list-style: none; }
.tree ul { margin-left: 11px; }
.tree li { position: relative; line-height: 11px; white-space: nowrap; }
.tree li::before {
  content: "";
  position: absolute;
  left: 4px;
  top: 0;
  bottom: 0;
  border-left: 1px dotted #bbb;
}
.tree li:last-child::before { bottom: auto; height: 6px; }
.tree > li:last-child::before { bottom: 0; height: auto; }
.tree span { display: block; width: fit-content; height: 11px; margin-left: 14px; }
.tree li::after { content: ""; position: absolute; left: 7px; top: 5px; width: 5px; border-top: 1px dotted #bbb; }
.tree .views { display: flex; align-items: center; gap: 2px; margin-left: 11px; }
.tree .picked { background: #e2e2e2; }
.box {
  position: absolute;
  z-index: 1;
  left: 2px;
  top: 3px;
  width: 5px;
  height: 5px;
  border: 1px solid #aaa;
  background: linear-gradient(#567, #567) center / 3px 1px no-repeat #fff;
}
.plus { background: linear-gradient(#567, #567) center / 3px 1px no-repeat, linear-gradient(#567, #567) center / 1px 3px no-repeat, #fff; }

/* Drawing view */
.view { flex: 1; min-width: 0; display: flex; flex-direction: column; border-left: 1px solid #999; }
.canvasrow { flex: 1; min-height: 0; display: flex; }
.canvas { position: relative; flex: 1; min-width: 0; overflow: hidden; background: #000; }
.drawing { width: 100%; height: 100%; }
.viewctl { position: absolute; right: 2px; top: 4px; }
.navbar { position: absolute; right: 1px; top: 17px; border-radius: 2px; background: #4a4a4a; }
.viewbar {
  flex: none;
  height: 12px;
  display: flex;
  align-items: center;
  padding: 0 1px 0 12px;
  background: #ececec;
  border-bottom: 1px solid #bbb;
}
.viewbar svg { width: 10px; height: 10px; }
.scale { width: 31px; white-space: nowrap; }
.viewtools { width: 124px; display: flex; justify-content: space-between; }
.viewbar .left { margin-left: 5px; }
.track { flex: 1; display: flex; justify-content: center; }
.track span { width: 9px; height: 8px; background: #c9c9c9; }
.grip { width: 5px; height: 5px; margin-left: 6px; background: linear-gradient(135deg, transparent 50%, #ccc 50%); }

/* Status bar */
.status {
  flex: none;
  height: 11px;
  display: flex;
  align-items: center;
  overflow: hidden;
  border-top: 1px solid #bbb;
  background: linear-gradient(#ddd, #cacaca);
}
.status p { flex: none; width: 266px; overflow: hidden; white-space: nowrap; }
.status svg { width: 10px; height: 10px; }
.worksets { margin: 0 3px 0 1px; }
.status select { height: 11px; border: 0; background-color: #fafafa; }
.wide { width: 112px; margin-right: 6px; }
.count { margin-left: 2px; }
.opts { margin: 0 4px 0 10px; }
.main { width: 84px; margin-left: 4px; padding-left: 2px; color: #888; }
.filters { margin-left: auto; display: flex; align-items: center; gap: 4px; padding-right: 25px; }
.filters span { margin-left: -3px; }
```
